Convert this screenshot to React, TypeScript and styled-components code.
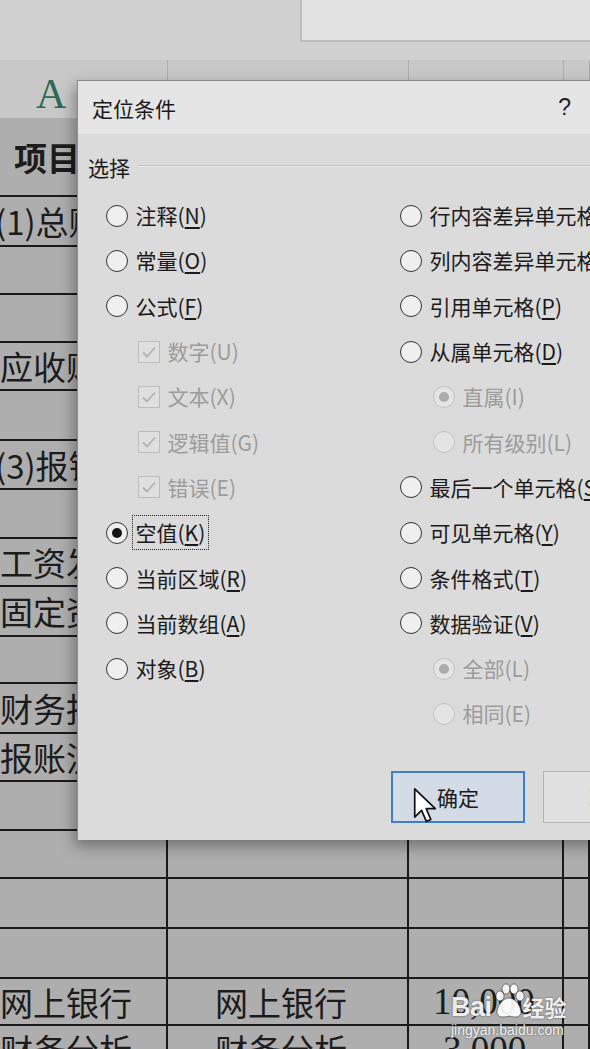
import React from "react";
import styled, { createGlobalStyle, css } from "styled-components";

const Global = createGlobalStyle`
  html, body { margin: 0; padding: 0; background: #cfcfcf; }
  body { font-family: "Noto Sans CJK SC", "Noto Sans", sans-serif; }
  #root { width: 590px; height: 1049px; }
`;

const COLS = "168px 241px 155px 1fr";

const Screen = styled.div`
  position: relative;
  width: 590px;
  height: 1049px;
  overflow: hidden;
  background: #cfcfcf;
  display: flex;
  flex-direction: column;
`;

const TopBar = styled.div`
  height: 60px;
  flex: none;
  display: flex;
  justify-content: flex-end;
  align-items: flex-start;
  background: #d0d0d0;
`;

const FormulaBox = styled.div`
  width: 290px;
  height: 42px;
  box-sizing: border-box;
  background: #e2e2e2;
  border-left: 2px solid #bcbcbc;
  border-bottom: 2px solid #bcbcbc;
`;

const HeaderRow = styled.div`
  height: 58px;
  flex: none;
  display: grid;
  grid-template-columns: ${COLS};
  background: #c8c8c8;
`;

const HeaderCell = styled.div<{ $active?: boolean }>`
  box-sizing: border-box;
  border-right: 1px solid #adadad;
  display: flex;
  align-items: center;
  justify-content: ${(p) => (p.$active ? "flex-start" : "center")};
  padding-left: ${(p) => (p.$active ? "36px" : "0")};
  padding-top: 10px;
  font-family: "Liberation Serif", serif;
  font-size: 42px;
  color: ${(p) => (p.$active ? "#2e6b55" : "#555")};
  border-bottom: ${(p) => (p.$active ? "3px solid #2f7d52" : "none")};
`;

const Sheet = styled.div`
  display: flex;
  flex-direction: column;
`;

const SheetRow = styled.div<{ $h: number }>`
  height: ${(p) => p.$h}px;
  flex: none;
  box-sizing: border-box;
  display: grid;
  grid-template-columns: ${COLS};
  border-bottom: 2px solid #1b1b1b;
`;

const Cell = styled.div<{ $pad?: number; $num?: boolean; $bold?: boolean }>`
  box-sizing: border-box;
  border-right: 2px solid #1b1b1b;
  background: #aeaeae;
  overflow: hidden;
  white-space: nowrap;
  display: flex;
  align-items: center;
  padding-left: ${(p) => Math.max(p.$pad ?? 0, 0)}px;
  text-indent: ${(p) => Math.min(p.$pad ?? 0, 0)}px;
  color: #1c1c1c;
  font-size: 33px;
  font-weight: ${(p) => (p.$bold ? 700 : 400)};
  ${(p) =>
    p.$num &&
    css`
      font-family: "Liberation Serif", serif;
      font-size: 37px;
    `}
`;

/* ---------- dialog ---------- */

const Dialog = styled.div`
  position: absolute;
  left: 77px;
  top: 80px;
  width: 540px;
  height: 760px;
  display: flex;
  flex-direction: column;
  background: #dbdbdb;
  border-left: 1px solid #8c8c8c;
  border-top: 1px solid #8c8c8c;
  box-sizing: border-box;
  box-shadow: -3px 6px 14px rgba(0, 0, 0, 0.35);
  color: #1a1a1a;
`;

const TitleBar = styled.div`
  height: 53px;
  flex: none;
  display: flex;
  align-items: center;
  padding: 0 46px 0 14px;
  background: #e5e5e5;
  font-size: 21px;
`;

const Help = styled.span`
  margin-left: auto;
  font-family: "Liberation Sans", sans-serif;
  font-size: 23px;
  color: #222;
`;

const Body = styled.div`
  flex: 1;
  display: flex;
  flex-direction: column;
`;

const GroupHeader = styled.div`
  margin-top: 20px;
  height: 26px;
  display: flex;
  align-items: center;
  gap: 8px;
  padding-left: 10px;
  font-size: 21px;
`;

const GroupLine = styled.div`
  flex: 1;
  border-top: 1px solid #c4c4c4;
  border-bottom: 1px solid #ebebeb;
  margin-top: -2px;
`;

const Options = styled.div`
  margin-top: 13px;
  display: grid;
  grid-template-columns: 294px 1fr;
  padding-left: 28px;
`;

const Column = styled.div`
  display: flex;
  flex-direction: column;
`;

const OptionRow = styled.div<{ $indent: number }>`
  height: 45.3px;
  flex: none;
  display: flex;
  align-items: center;
  gap: 4px;
  padding-left: ${(p) => p.$indent}px;
  white-space: nowrap;
`;

const Radio = styled.span<{ $checked?: boolean; $disabled?: boolean }>`
  width: 22px;
  height: 22px;
  flex: none;
  box-sizing: border-box;
  border-radius: 50%;
  border: 1.7px solid ${(p) => (p.$disabled ? "#c2c2c2" : "#333")};
  background: ${(p) => (p.$disabled ? "#e4e4e4" : "#efefef")};
  display: grid;
  place-items: center;
  &::after {
    content: "";
    width: 10px;
    height: 10px;
    border-radius: 50%;
    background: ${(p) => (p.$disabled ? "#acacac" : "#151515")};
    display: ${(p) => (p.$checked ? "block" : "none")};
  }
`;

const Check = styled.span`
  width: 22px;
  height: 22px;
  flex: none;
  box-sizing: border-box;
  border: 1.6px solid #bdbdbd;
  background: #dfdfdf;
  display: grid;
  place-items: center;
`;

const Label = styled.span<{ $disabled?: boolean; $focus?: boolean }>`
  font-size: 21px;
  line-height: 29px;
  padding: 2px 2.5px;
  border: 1.6px ${(p) => (p.$focus ? "dotted #222" : "solid transparent")};
  color: ${(p) => (p.$disabled ? "#9c9c9c" : "#1a1a1a")};
  u {
    text-decoration-thickness: 1.5px;
    text-underline-offset: 3px;
  }
`;

const ButtonRow = styled.div`
  margin-top: auto;
  display: flex;
  align-items: flex-end;
  gap: 18px;
  padding: 0 0 17px 313px;
`;

const Button = styled.div<{ $primary?: boolean }>`
  width: 134px;
  height: 52px;
  flex: none;
  box-sizing: border-box;
  display: flex;
  align-items: center;
  justify-content: center;
  font-size: 21px;
  color: #1a1a1a;
  background: ${(p) => (p.$primary ? "#d3dce6" : "#e0e0e0")};
  border: ${(p) => (p.$primary ? "2px solid #3f80c4" : "1.6px solid #b3b3b3")};
`;

const Cursor = styled.svg`
  position: absolute;
  left: 413px;
  top: 787px;
`;

/* ---------- watermark ---------- */

const Watermark = styled.div`
  position: absolute;
  left: 451px;
  top: 982px;
  display: flex;
  flex-direction: column;
  color: rgba(255, 255, 255, 0.92);
  text-shadow: 0 0 2px rgba(0, 0, 0, 0.55);
`;

const MarkLine = styled.div`
  display: flex;
  align-items: center;
  height: 40px;
`;

const MarkBai = styled.span`
  font-family: "Liberation Sans", sans-serif;
  font-weight: 700;
  font-size: 27px;
  letter-spacing: -0.5px;
  margin-top: 10px;
`;

const MarkJy = styled.span`
  font-size: 22px;
  font-weight: 700;
  margin-left: -3px;
  margin-top: 8px;
`;

const MarkUrl = styled.span`
  font-family: "Liberation Sans", sans-serif;
  font-size: 14px;
  margin-top: 0px;
`;

type Opt = {
  text: string;
  key: string;
  kind: "radio" | "check" | "sub";
  checked?: boolean;
  disabled?: boolean;
  focus?: boolean;
};

const leftOpts: Opt[] = [
  { text: "注释", key: "N", kind: "radio" },
  { text: "常量", key: "O", kind: "radio" },
  { text: "公式", key: "F", kind: "radio" },
  { text: "数字", key: "U", kind: "check", disabled: true },
  { text: "文本", key: "X", kind: "check", disabled: true },
  { text: "逻辑值", key: "G", kind: "check", disabled: true },
  { text: "错误", key: "E", kind: "check", disabled: true },
  { text: "空值", key: "K", kind: "radio", checked: true, focus: true },
  { text: "当前区域", key: "R", kind: "radio" },
  { text: "当前数组", key: "A", kind: "radio" },
  { text: "对象", key: "B", kind: "radio" },
];

const rightOpts: Opt[] = [
  { text: "行内容差异单元格", key: "W", kind: "radio" },
  { text: "列内容差异单元格", key: "M", kind: "radio" },
  { text: "引用单元格", key: "P", kind: "radio" },
  { text: "从属单元格", key: "D", kind: "radio" },
  { text: "直属", key: "I", kind: "sub", checked: true, disabled: true },
  { text: "所有级别", key: "L", kind: "sub", disabled: true },
  { text: "最后一个单元格", key: "S", kind: "radio" },
  { text: "可见单元格", key: "Y", kind: "radio" },
  { text: "条件格式", key: "T", kind: "radio" },
  { text: "数据验证", key: "V", kind: "radio" },
  { text: "全部", key: "L", kind: "sub", checked: true, disabled: true },
  { text: "相同", key: "E", kind: "sub", disabled: true },
];

function Option({ o }: { o: Opt }) {
  const indent = o.kind === "radio" ? 0 : o.kind === "check" ? 32 : 33;
  return (
    <OptionRow $indent={indent}>
      {o.kind === "check" ? (
        <Check>
          <svg width="18" height="18" viewBox="0 0 18 18">
            <path d="M3 9.5 L7 13.5 L15 4.5" fill="none" stroke="#b2b2b2" strokeWidth="1.8" />
          </svg>
        </Check>
      ) : (
        <Radio $checked={o.checked} $disabled={o.disabled} />
      )}
      <Label $disabled={o.disabled} $focus={o.focus}>
        {o.text}(
        {o.disabled ? o.key : <u>{o.key}</u>})
      </Label>
    </OptionRow>
  );
}

type RowData = { h: number; a?: string; aPad?: number; aBold?: boolean; b?: string; c?: string; cPad?: number };

const rows: RowData[] = [
  { h: 79, a: "项目", aPad: 14, aBold: true },
  { h: 50, a: "(1)总账科目", aPad: -5 },
  { h: 48 },
  { h: 48 },
  { h: 48, a: "应收账款", aPad: 0 },
  { h: 50 },
  { h: 49, a: "(3)报销", aPad: -5 },
  { h: 49 },
  { h: 48, a: "工资发放", aPad: 0 },
  { h: 50, a: "固定资产", aPad: 0 },
  { h: 47 },
  { h: 50, a: "财务报表", aPad: 0 },
  { h: 48, a: "报账流程", aPad: 0 },
  { h: 49 },
  { h: 48 },
  { h: 50 },
  { h: 50 },
  { h: 47, a: "网上银行", aPad: 0, b: "网上银行", c: "10,000", cPad: 24 },
  { h: 48, a: "财务分析", aPad: 0, b: "财务分析", c: "3,000", cPad: 34 },
];

export default function App() {
  return (
    <>
      <Global />
      <Screen>
        <TopBar>
          <FormulaBox />
        </TopBar>
        <HeaderRow>
          <HeaderCell $active>A</HeaderCell>
          <HeaderCell>B</HeaderCell>
          <HeaderCell>C</HeaderCell>
          <HeaderCell />
        </HeaderRow>
        <Sheet>
          {rows.map((r, i) => (
            <SheetRow key={i} $h={r.h}>
              <Cell $pad={r.aPad} $bold={r.aBold}>{r.a}</Cell>
              <Cell $pad={47}>{r.b}</Cell>
              <Cell $pad={r.cPad} $num>{r.c}</Cell>
              <Cell />
            </SheetRow>
          ))}
        </Sheet>

        <Dialog>
          <TitleBar>
            定位条件
            <Help>?</Help>
          </TitleBar>
          <Body>
            <GroupHeader>
              选择
              <GroupLine />
            </GroupHeader>
            <Options>
              <Column>
                {leftOpts.map((o, i) => (
                  <Option key={i} o={o} />
                ))}
              </Column>
              <Column>
                {rightOpts.map((o, i) => (
                  <Option key={i} o={o} />
                ))}
              </Column>
            </Options>
            <ButtonRow>
              <Button $primary>确定</Button>
              <Button>取消</Button>
            </ButtonRow>
          </Body>
        </Dialog>

        <Cursor width="24" height="37" viewBox="0 0 14 21.5">
          <path
            d="M1 1 L1 17.5 L5 13.6 L7.8 20 L10.4 18.9 L7.7 12.6 L13 12.6 Z"
            fill="#fff"
            stroke="#111"
            strokeWidth="1"
            strokeLinejoin="round"
          />
        </Cursor>

        <Watermark>
          <MarkLine>
            <MarkBai>Bai</MarkBai>
            <svg width="34" height="38" viewBox="0 0 34 38">
              <g fill="rgba(255,255,255,0.92)" stroke="rgba(0,0,0,0.45)" strokeWidth="1">
                <ellipse cx="8" cy="13" rx="4" ry="5" />
                <ellipse cx="14" cy="6" rx="4" ry="5" />
                <ellipse cx="22" cy="6" rx="4" ry="5" />
                <ellipse cx="28" cy="13" rx="4" ry="5" />
                <path d="M17 15 C10 15 5 24 5 29 C5 34 10 35 17 33 C24 35 29 34 29 29 C29 24 24 15 17 15 Z" />
              </g>
            </svg>
            <MarkJy>经验</MarkJy>
          </MarkLine>
          <MarkUrl>jingyan.baidu.com</MarkUrl>
        </Watermark>
      </Screen>
    </>
  );
}
